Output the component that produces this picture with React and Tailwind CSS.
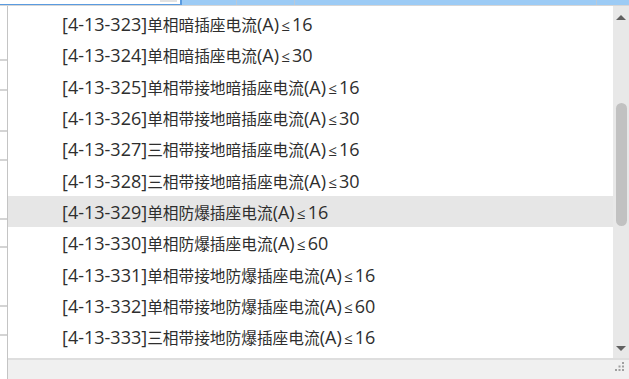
import React from "react";

const items = [
  "[4-13-323]单相暗插座电流(A)≤16",
  "[4-13-324]单相暗插座电流(A)≤30",
  "[4-13-325]单相带接地暗插座电流(A)≤16",
  "[4-13-326]单相带接地暗插座电流(A)≤30",
  "[4-13-327]三相带接地暗插座电流(A)≤16",
  "[4-13-328]三相带接地暗插座电流(A)≤30",
  "[4-13-329]单相防爆插座电流(A)≤16",
  "[4-13-330]单相防爆插座电流(A)≤60",
  "[4-13-331]单相带接地防爆插座电流(A)≤16",
  "[4-13-332]单相带接地防爆插座电流(A)≤60",
  "[4-13-333]三相带接地防爆插座电流(A)≤16",
];

const leftRows = [55, 30, 41, 29, 59, 28, 59, 29];

function segments(text) {
  const out = [];
  const re = /([\u4e00-\u9fff]+)|(\u2264)|([^\u4e00-\u9fff\u2264]+)/g;
  let m;
  while ((m = re.exec(text))) {
    out.push({ kind: m[1] ? "cjk" : m[2] ? "le" : "latin", t: m[0] });
  }
  return out;
}

function Label({ text }) {
  return (
    <span className="whitespace-nowrap">
      {segments(text).map((s, i) => {
        if (s.kind === "cjk")
          return (
            <span
              key={i}
              className="text-[15.7px]"
              style={{ fontFamily: '"Noto Sans CJK SC", sans-serif' }}
            >
              {s.t}
            </span>
          );
        if (s.kind === "le")
          return (
            <span
              key={i}
              className="inline-block w-[13px] text-center text-[15px]"
              style={{ fontFamily: '"Open Sans", sans-serif' }}
            >
              {s.t}
            </span>
          );
        return (
          <span
            key={i}
            className="text-[18px]"
            style={{ fontFamily: '"Open Sans", sans-serif' }}
          >
            {s.t}
          </span>
        );
      })}
    </span>
  );
}

export default function App() {
  return (
    <div
      className="w-[629px] h-[379px] overflow-hidden bg-white flex flex-col"
      style={{ fontFamily: '"Open Sans", "Noto Sans CJK SC", sans-serif' }}
    >
      {/* top strip */}
      <div className="h-[6px] flex shrink-0 border-b border-[#d6d6d6]">
        <div className="w-[182px] h-[5px] bg-white border-r-2 border-b border-[#5a9be0] relative">
          <div className="absolute left-[160px] top-0 w-[17px] h-[2px] bg-[#e2e2e2]" />
        </div>
        <div className="flex-1 h-[5px] bg-[#9ccbf5] flex">
          <div className="w-[55px] border-r border-[#b9c9d8]" />
          <div className="w-[58px] border-r border-[#b9c9d8]" />
          <div className="w-[302px] border-r border-[#b9c9d8]" />
          <div className="flex-1" />
        </div>
      </div>

      <div className="flex-1 flex min-h-0">
        {/* spreadsheet background on the left */}
        <div className="w-[7px] flex flex-col shrink-0">
          {leftRows.map((h, i) => (
            <div
              key={i}
              className="border-b-2 border-[#d4d4d4] shrink-0"
              style={{ height: h }}
            />
          ))}
        </div>

        {/* dropdown panel */}
        <div className="flex-1 flex flex-col border-l border-[#c4c4c4] min-w-0">
          <div className="flex-1 flex min-h-0">
            <div className="flex-1 pt-[2px] overflow-hidden">
              {items.map((t, i) => (
                <div
                  key={i}
                  className={`h-[31.3px] flex items-center pl-[54px] pt-[1px] text-[#2e2e2e] leading-none ${
                    i === 6 ? "bg-[#e6e6e6]" : ""
                  }`}
                >
                  <Label text={t} />
                </div>
              ))}
            </div>
            {/* scrollbar */}
            <div className="w-[16px] bg-[#e8e8e8] flex flex-col items-center shrink-0">
              <div className="h-[20px] flex items-center justify-center pt-[3px]">
                <div className="w-0 h-0 border-l-[5px] border-r-[5px] border-b-[5px] border-l-transparent border-r-transparent border-b-[#616161]" />
              </div>
              <div className="h-[77px]" />
              <div className="w-[11px] h-[123px] rounded-full bg-[#c1c1c1] ml-[1px]" />
              <div className="flex-1" />
              <div className="h-[16px] flex items-center justify-center pb-[4px]">
                <div className="w-0 h-0 border-l-[5px] border-r-[5px] border-t-[5px] border-l-transparent border-r-transparent border-t-[#616161]" />
              </div>
            </div>
          </div>
          {/* bottom bar */}
          <div className="h-[21px] bg-[#f0f0f0] border-t-2 border-[#dedede] flex justify-end items-end shrink-0">
            <svg width="12" height="12" viewBox="0 0 12 12" className="mb-[5px] mr-[3px]">
              <rect x="8" y="0" width="2" height="2" fill="#a0a0a0" />
              <rect x="8" y="3.5" width="2" height="2" fill="#a0a0a0" />
              <rect x="4.5" y="3.5" width="2" height="2" fill="#a0a0a0" />
              <rect x="8" y="7" width="2" height="2" fill="#a0a0a0" />
              <rect x="4.5" y="7" width="2" height="2" fill="#a0a0a0" />
              <rect x="1" y="7" width="2" height="2" fill="#a0a0a0" />
            </svg>
          </div>
        </div>
      </div>
    </div>
  );
}
